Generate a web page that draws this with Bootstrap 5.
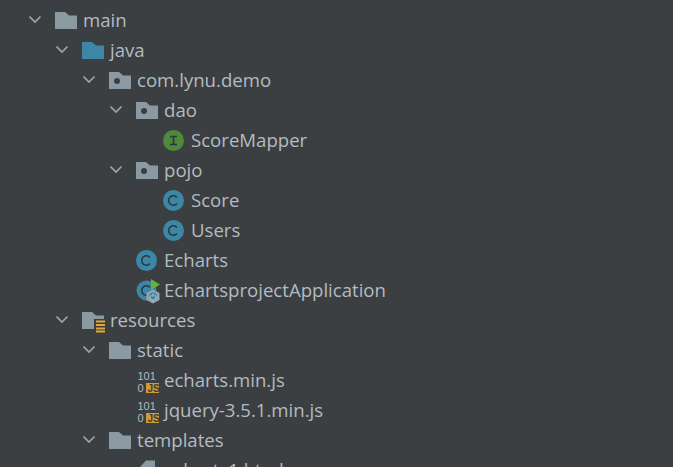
<!doctype html>
<html lang="en"><head><meta charset="utf-8"><title>Project tree</title>
<link href="https://cdn.jsdelivr.net/npm/bootstrap@5.3.0/dist/css/bootstrap.min.css" rel="stylesheet">
<style>
html,body{height:467px;overflow:hidden;background:#3c3f41}
.tree-list{padding:5px 0 0 0;margin:0;list-style:none}
.tree-row{height:30px;color:#b3bbc1;font-family:"Open Sans","Noto Sans",sans-serif;font-size:18.6px;line-height:30px;white-space:nowrap}
.lv0{padding-left:29px}.lv1{padding-left:56px}.lv2{padding-left:83px}.lv3{padding-left:110px}.lv4{padding-left:137px}
.chev{width:26px;height:30px;flex:none}
.nochev{width:26px;flex:none}
.ico{width:28px;height:30px;flex:none}
.bin-txt{font-family:"Liberation Sans",sans-serif;font-size:11px;fill:#b3bbc1}
.js-txt{font-family:"Liberation Sans",sans-serif;font-weight:700;font-size:10px;fill:#3c3f41}
</style></head><body>
<svg width="0" height="0" class="d-block">
<defs>
<symbol id="chev" viewBox="0 0 26 30"><path d="M0.5 11.5 6 17 11.5 11.5" fill="none" stroke="#9ea3a6" stroke-width="1.700"/></symbol>
<symbol id="folder" viewBox="0 0 28 30"><path d="M0 7H10L14 10.500H22V24H0Z" fill="#8a99a2"/></symbol>
<symbol id="src" viewBox="0 0 28 30"><path d="M0 7H10L14 10.500H22V24H0Z" fill="#3d87a6"/></symbol>
<symbol id="pkg" viewBox="0 0 28 30"><path d="M0 7H10L14 10.500H22V24H0Z" fill="#8a99a2"/><circle cx="8" cy="16" r="3" fill="#3c3f41"/></symbol>
<symbol id="res" viewBox="0 0 28 30"><path d="M0 7H10L14 10.500H22V24H0Z" fill="#8a99a2"/><rect x="12" y="14" width="11" height="13" fill="#3c3f41"/><path d="M14 16.500H23M14 20H23M14 23.500H23M14 26.500H23" stroke="#e0a735" stroke-width="2"/></symbol>
<symbol id="cls" viewBox="0 0 28 30"><circle cx="10.500" cy="15.500" r="10.500" fill="#3a87a6"/><path d="M14 12.500A4.700 4.700 0 1 0 14 18.500" fill="none" stroke="#2f3638" stroke-width="1.500"/></symbol>
<symbol id="ifc" viewBox="0 0 28 30"><circle cx="10.500" cy="15.500" r="10.500" fill="#4e8a3c"/><path d="M7 11.500H14M7 19.500H14M10.500 11.500V19.500" fill="none" stroke="#2f3638" stroke-width="1.600"/></symbol>
<symbol id="app" viewBox="0 0 28 30"><circle cx="10.500" cy="15.500" r="10" fill="#3a87a6"/><path d="M14 12.500A4.700 4.700 0 1 0 14 18.500" fill="none" stroke="#2f3638" stroke-width="1.500"/><path d="M15 4 24 9.500 15 15Z" fill="#5fb33d"/><path d="M17 14.500 23.500 18V25L17 28.500 10.500 25V18Z" fill="#9aa4aa"/><circle cx="17" cy="21.500" r="4.200" fill="#3a87a6"/><path d="M15 20A3 3 0 1 0 19 20M17 18.500V21.500" fill="none" stroke="#c5d1d8"/></symbol>
<symbol id="js" viewBox="0 0 28 30"><rect x="10" y="18" width="13" height="10" fill="#d29a32"/><text class="js-txt" x="11.500" y="26.500">JS</text><text class="bin-txt" x="1.500" y="15">101</text><text class="bin-txt" x="1.500" y="26.500">0</text></symbol>
<symbol id="html" viewBox="0 0 28 30"><path d="M3 13 10 5.500H19V30H3Z" fill="#8a99a2"/></symbol>
</defs></svg>
<ul class="tree-list">
<li class="tree-row d-flex lv0"><svg class="chev"><use href="#chev"/></svg><svg class="ico"><use href="#folder"/></svg><span>main</span></li>
<li class="tree-row d-flex lv1"><svg class="chev"><use href="#chev"/></svg><svg class="ico"><use href="#src"/></svg><span>java</span></li>
<li class="tree-row d-flex lv2"><svg class="chev"><use href="#chev"/></svg><svg class="ico"><use href="#pkg"/></svg><span>com.lynu.demo</span></li>
<li class="tree-row d-flex lv3"><svg class="chev"><use href="#chev"/></svg><svg class="ico"><use href="#pkg"/></svg><span>dao</span></li>
<li class="tree-row d-flex lv4"><span class="nochev"></span><svg class="ico"><use href="#ifc"/></svg><span>ScoreMapper</span></li>
<li class="tree-row d-flex lv3"><svg class="chev"><use href="#chev"/></svg><svg class="ico"><use href="#pkg"/></svg><span>pojo</span></li>
<li class="tree-row d-flex lv4"><span class="nochev"></span><svg class="ico"><use href="#cls"/></svg><span>Score</span></li>
<li class="tree-row d-flex lv4"><span class="nochev"></span><svg class="ico"><use href="#cls"/></svg><span>Users</span></li>
<li class="tree-row d-flex lv3"><span class="nochev"></span><svg class="ico"><use href="#cls"/></svg><span>Echarts</span></li>
<li class="tree-row d-flex lv3"><span class="nochev"></span><svg class="ico"><use href="#app"/></svg><span>EchartsprojectApplication</span></li>
<li class="tree-row d-flex lv1"><svg class="chev"><use href="#chev"/></svg><svg class="ico"><use href="#res"/></svg><span>resources</span></li>
<li class="tree-row d-flex lv2"><svg class="chev"><use href="#chev"/></svg><svg class="ico"><use href="#folder"/></svg><span>static</span></li>
<li class="tree-row d-flex lv3"><span class="nochev"></span><svg class="ico"><use href="#js"/></svg><span>echarts.min.js</span></li>
<li class="tree-row d-flex lv3"><span class="nochev"></span><svg class="ico"><use href="#js"/></svg><span>jquery-3.5.1.min.js</span></li>
<li class="tree-row d-flex lv2"><svg class="chev"><use href="#chev"/></svg><svg class="ico"><use href="#folder"/></svg><span>templates</span></li>
<li class="tree-row d-flex lv3"><span class="nochev"></span><svg class="ico"><use href="#html"/></svg><span>echarts1.html</span></li>
</ul>
<script src="https://cdn.jsdelivr.net/npm/bootstrap@5.3.0/dist/js/bootstrap.bundle.min.js"></script>
</body></html>
